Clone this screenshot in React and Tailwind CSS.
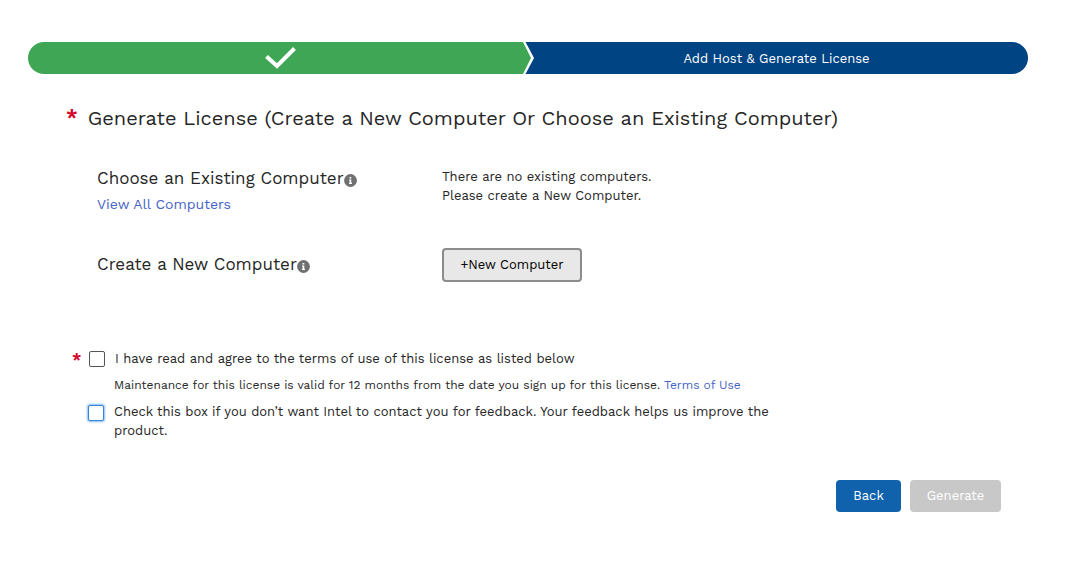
import React from 'react';

function InfoIcon() {
  return (
    <svg className="mt-1 h-[13px] w-[13px] shrink-0" viewBox="0 0 13 13" role="img" aria-label="More information">
      <circle cx="6.5" cy="6.5" r="6.4" fill="#707070" />
      <path d="M5.5 3h1.8v1.5H5.5zM5 5.5h2.3v3.3h.7v1.1H5V8.8h.6V6.5H5z" fill="#fff" />
    </svg>
  );
}

function Progress() {
  return (
    <ol className="flex h-8 overflow-hidden rounded-full text-[13px] text-white">
      <li className="flex w-[49.5%] items-center justify-center bg-[#3ea655] pl-2.5">
        <svg className="h-[22px] w-[31px]" viewBox="0 0 31 22" role="img" aria-label="Completed">
          <path d="M1.5 9.5L12 19L29.5 1.5" fill="none" stroke="#fff" strokeWidth="4" />
        </svg>
      </li>
      <li className="flex flex-1 bg-[#004483]" aria-current="step">
        <svg className="h-8 w-3 shrink-0" viewBox="0 0 12 32" aria-hidden="true">
          <path d="M0 0H2.5L11 16L2.5 32H0z" fill="#fff" />
          <path d="M0 0L8 16L0 32z" fill="#3ea655" />
        </svg>
        <span className="flex flex-1 items-center justify-center pr-2.5">Add Host &amp; Generate License</span>
      </li>
    </ol>
  );
}

export default function App() {
  return (
    <main className="bg-white pt-[42px] pr-[55px] pb-12 pl-7 font-['Work_Sans','Inter',sans-serif] text-[13px] leading-[19px] text-[#262626]">
      <Progress />
      <form className="pr-[27px]" onSubmit={(e) => e.preventDefault()}>
        <h1 className="mt-8 flex gap-2.5 pl-[38px] text-[20px] leading-6">
          <span className="leading-5 font-bold text-[#d4072b]">*</span>
          Generate License (Create a New Computer Or Choose an Existing Computer)
        </h1>

        <section className="mt-9 flex pl-[69px]">
          <div className="w-[345px] shrink-0">
            <h2 className="flex items-center text-[17px] leading-6">
              Choose an Existing Computer
              <InfoIcon />
            </h2>
            <a href="#computers" className="mt-1 block text-[14px] leading-5 text-[#4563c6]">View All Computers</a>
          </div>
          <p className="pt-px">
            There are no existing computers.
            <br />
            Please create a New Computer.
          </p>
        </section>

        <section className="mt-[34px] flex items-start pl-[69px]">
          <h2 className="flex w-[345px] shrink-0 items-center pt-1 text-[17px] leading-6">
            Create a New Computer
            <InfoIcon />
          </h2>
          <button type="button" className="h-[34px] w-[140px] rounded-[4px] border-2 border-[#8c8c8c] bg-[#e8e8e8] pb-0.5 text-black">
            +New Computer
          </button>
        </section>

        <section className="mt-[67px] pl-11">
          <div className="flex items-center">
            <span className="w-[17px] text-[16px] font-bold text-[#d4072b]">*</span>
            <input id="terms" type="checkbox" required className="h-4 w-4 shrink-0 appearance-none rounded-[2px] border border-[#555] bg-white checked:bg-[#1264b0]" />
            <label htmlFor="terms" className="pl-2.5">I have read and agree to the terms of use of this license as listed below</label>
          </div>
          <p className="mt-2 pl-[42px] text-[12px] leading-[18px]">
            Maintenance for this license is valid for 12 months from the date you sign up for this license.{' '}
            <a href="#terms-of-use" className="text-[#4563c6]">Terms of Use</a>
          </p>
          <div className="mt-2 flex items-start pl-4">
            <input id="contact" type="checkbox" className="mt-[3px] h-4 w-4 shrink-0 appearance-none rounded-[2px] border border-[#3486d8] bg-white shadow-[0_0_2px_1px_#8bbdf0] checked:bg-[#1264b0]" />
            <label htmlFor="contact" className="max-w-[690px] pl-2.5">
              Check this box if you don’t want Intel to contact you for feedback. Your feedback helps us improve the product.
            </label>
          </div>
        </section>

        <div className="mt-10 flex justify-end gap-[9px]">
          <button type="button" className="h-8 w-[65px] rounded-[4px] bg-[#1062ad] pb-0.5 text-white">Back</button>
          <button type="submit" disabled className="h-8 w-[91px] rounded-[4px] bg-[#c8c8c8] pb-0.5 text-white">Generate</button>
        </div>
      </form>
    </main>
  );
}
